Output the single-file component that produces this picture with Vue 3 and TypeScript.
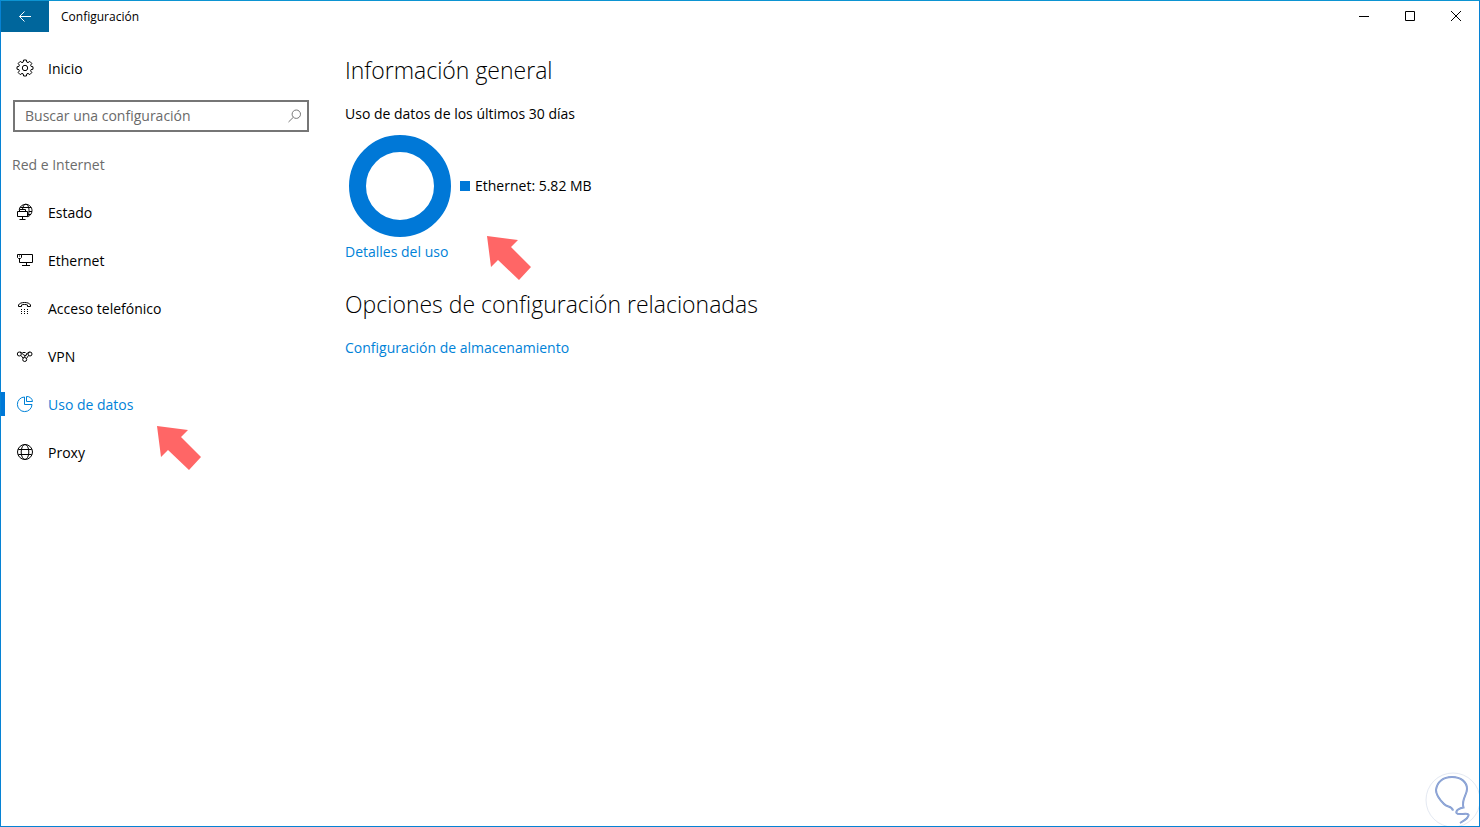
<script setup lang="ts">
import { ref } from 'vue'

interface NavItem {
  id: string
  label: string
}

const items: NavItem[] = [
  { id: 'status', label: 'Estado' },
  { id: 'ethernet', label: 'Ethernet' },
  { id: 'dialup', label: 'Acceso telefónico' },
  { id: 'vpn', label: 'VPN' },
  { id: 'usage', label: 'Uso de datos' },
  { id: 'proxy', label: 'Proxy' },
]

const active = ref('usage')
const query = ref('')
</script>

<template>
  <div class="window">
    <header class="titlebar">
      <button class="back" type="button" aria-label="Atrás">
        <svg width="14" height="12" viewBox="0 0 14 12"><path d="M13 5.500H1.500M6.500.500L1.500 5.500l5 5" /></svg>
      </button>
      <span class="title">Configuración</span>
      <div class="controls">
        <button type="button" aria-label="Minimizar">
          <svg width="12" height="12" viewBox="0 0 12 12"><path d="M1 5.500h10" /></svg>
        </button>
        <button type="button" aria-label="Maximizar">
          <svg width="12" height="12" viewBox="0 0 12 12"><path d="M1.500.500h9v9h-9z" /></svg>
        </button>
        <button type="button" aria-label="Cerrar">
          <svg width="12" height="12" viewBox="0 0 12 12"><path d="M1 0l10 10M11 0L1 10" /></svg>
        </button>
      </div>
    </header>

    <div class="body">
      <aside class="sidebar">
        <a class="row home" href="#inicio">
          <svg class="icon" viewBox="0 0 18 18">
            <path d="M7.6 1h2.8l.4 2.1 1.2.5 1.8-1.2 2 2-1.2 1.8.5 1.2 1.9.4v2.4l-1.9.4-.5 1.2 1.2 1.8-2 2-1.8-1.2-1.2.5-.4 2.1H7.6l-.4-2.1-1.2-.5-1.8 1.2-2-2 1.2-1.8-.5-1.2L1 10.200V7.800l1.900-.4.5-1.200-1.200-1.800 2-2L6 3.600l1.200-.5z" />
            <circle cx="9" cy="9" r="2.700" />
          </svg>
          <span>Inicio</span>
        </a>

        <label class="search">
          <input v-model="query" type="text" placeholder="Buscar una configuración" aria-label="Buscar una configuración" />
          <svg width="14" height="14" viewBox="0 0 14 14"><circle cx="9.300" cy="5.200" r="4.200" /><path d="M6.300 8.300L1.500 13" /></svg>
        </label>

        <h2 class="section">Red e Internet</h2>

        <nav>
          <a
            v-for="item in items"
            :key="item.id"
            class="row"
            :class="{ active: item.id === active }"
            :href="'#' + item.id"
            @click="active = item.id"
          >
            <svg class="icon" viewBox="0 0 18 18">
              <g v-if="item.id === 'status'">
                <path d="M3.200 6.500C3.800 3.500 6.500 1.300 9.700 1.300c3.600 0 6.300 2.900 6.300 6.300 0 3.100-2.200 5.600-4.500 6.100" />
                <path d="M6.500 6.500c.3-3 1.500-5.200 3.200-5.200 2 0 3.300 2.700 3.300 6.200 0 2.400-.5 4.500-1.500 6M4.200 4.500h11M13 8.500h3M12 11.500h3" />
                <path d="M3.500 8.500v-2h6v2M1.500 8.500h10v5h-10zM6.500 13.500v3M3.500 16.500h6" />
              </g>
              <g v-else-if="item.id === 'ethernet'">
                <path d="M5.500 3.500h11v8h-13V8M10.500 11.500v3M6 14.500h8M1.500 3.500h4v3l-1 1h-2l-1-1zM3 5h1" />
              </g>
              <g v-else-if="item.id === 'dialup'">
                <path d="M5.500 7.500h-3V6C3.300 4.300 5.700 3.500 8.500 3.500s5.200.8 6 2.500v1.500h-3V6C10 5.300 7 5.300 5.500 6z" />
                <path class="dots" d="M5 10h1v1H5zM8 10h1v1H8zM11 10h1v1h-1zM5 12h1v1H5zM8 12h1v1H8zM11 12h1v1h-1zM5 14h1v1H5zM8 14h1v1H8zM11 14h1v1h-1z" />
              </g>
              <g v-else-if="item.id === 'vpn'">
                <circle cx="3.300" cy="7" r="2" />
                <circle cx="14" cy="7" r="2" />
                <circle cx="8.700" cy="12.500" r="2" />
                <path d="M4 5c2.500 0 2.500 3.500 5 3.500 1.500 0 2-1 1.500-2M13.500 5c-3 0-3 4.500-6 5.500M5 8.500l2 2.500M12.500 8.500l-2 3M6.500 5.500h3" />
              </g>
              <g v-else-if="item.id === 'usage'">
                <path d="M8.500 2a7.300 7.300 0 1 0 7.500 7.500H8.500z" />
                <path d="M10.500 1.500a5.500 5.500 0 0 1 6 5h-6z" />
              </g>
              <g v-else>
                <circle cx="9" cy="9" r="7.500" />
                <ellipse cx="9" cy="9" rx="3.800" ry="7.500" />
                <path d="M2.300 6.500h13.400M2.300 11.500h13.400" />
              </g>
            </svg>
            <span>{{ item.label }}</span>
            <svg v-if="item.id === 'usage'" class="pointer" viewBox="0 0 44 44">
              <path d="M0 0l31 4-7 7 20 20-12 13-21-20-7 7z" />
            </svg>
          </a>
        </nav>
      </aside>

      <main class="content">
        <section class="block">
          <h1>Información general</h1>
          <p>Uso de datos de los últimos 30 días</p>
          <div class="usage">
            <svg class="ring" viewBox="0 0 102 102" role="img" aria-label="Ethernet: 5.82 MB">
              <circle cx="51" cy="51" r="42.500" />
            </svg>
            <span class="swatch"></span>
            <span>Ethernet: 5.82 MB</span>
            <svg class="pointer" viewBox="0 0 44 44">
              <path d="M0 0l31 4-7 7 20 20-12 13-21-20-7 7z" />
            </svg>
          </div>
          <a class="link" href="#detalles">Detalles del uso</a>
        </section>
        <section class="block">
          <h1>Opciones de configuración relacionadas</h1>
          <a class="link" href="#almacenamiento">Configuración de almacenamiento</a>
        </section>
      </main>
    </div>

    <svg class="bulb" viewBox="0 0 54 54" aria-hidden="true">
      <circle class="halo" cx="28" cy="28" r="27" />
      <path d="M28 38.500c-1-5-6-3-9-6.500C14 27 11 23 11 18 12 10 18 5 27 5c9 0 15 5 15 12 0 6-6 11-3.500 18.500-4 .5-8 3-7 5.500 2 3 10-1 12 1.500 1 3-4 6-8.500 8.500" />
      <path class="sheen" d="M28 38.500c-1-5-6-3-9-6.500C14 27 11 23 11 18 12 10 18 5 27 5c9 0 15 5 15 12 0 6-6 11-3.500 18.500-4 .5-8 3-7 5.500 2 3 10-1 12 1.500 1 3-4 6-8.500 8.500" />
    </svg>
  </div>
</template>

<style>
body {
  margin: 0;
}
</style>

<style scoped>
.window {
  position: relative;
  box-sizing: border-box;
  min-height: 100vh;
  border: 1px solid #0682d4;
  border-top-color: #0c94d2;
  background: #fff;
  color: #000;
  font: 14px/20px "Segoe UI", "Open Sans", "Noto Sans", sans-serif;
}
svg {
  fill: none;
  stroke: currentColor;
  flex: none;
}
button {
  padding: 0;
  border: 0;
  background: none;
  color: #000;
  display: flex;
  align-items: center;
  justify-content: center;
}
.titlebar {
  display: flex;
  height: 31px;
}
.back {
  width: 48px;
  background: #00669c;
  color: #fff;
}
.title {
  padding-left: 12px;
  font-size: 12px;
  line-height: 31px;
}
.controls {
  display: flex;
  margin-left: auto;
}
.controls button {
  width: 46px;
}
.body {
  display: flex;
}
.sidebar {
  flex: none;
  width: 308px;
  padding-top: 12px;
}
.row {
  position: relative;
  display: flex;
  align-items: center;
  gap: 14px;
  height: 48px;
  padding-left: 15px;
  color: #000;
  line-height: 22px;
  text-decoration: none;
}
.row span {
  padding-top: 2px;
}
.icon {
  width: 18px;
  height: 18px;
}
.dots {
  fill: currentColor;
  stroke: none;
}
.row.active {
  color: #0082d8;
}
.row.active::before {
  content: "";
  position: absolute;
  left: 0;
  top: 12px;
  width: 4px;
  height: 24px;
  background: #0078d7;
}
.search {
  display: flex;
  align-items: center;
  box-sizing: border-box;
  height: 32px;
  margin: 8px 0 0 12px;
  padding: 0 6px 0 10px;
  border: 2px solid #767676;
  color: #767676;
}
.search input {
  flex: 1;
  min-width: 0;
  padding: 0;
  border: 0;
  outline: 0;
  background: none;
  font: inherit;
}
.search input::placeholder {
  color: #6a6a6a;
  opacity: 1;
}
.section {
  margin: 23px 0 13px 11px;
  color: #6c6c6c;
  font-size: 14px;
  line-height: 20px;
  font-weight: 400;
}
.content {
  flex: 1;
  padding: 22px 36px 0;
}
.block {
  margin-bottom: 26px;
}
h1 {
  margin: 0 0 18px;
  font-size: 23px;
  line-height: 32px;
  font-weight: 300;
}
p {
  margin: 0;
}
.usage {
  position: relative;
  display: flex;
  align-items: center;
  width: max-content;
  margin: 11px 0 5px 4px;
}
.ring {
  width: 102px;
  height: 102px;
  stroke: #0078d7;
  stroke-width: 17px;
}
.swatch {
  width: 10px;
  height: 10px;
  margin: 0 5px 0 9px;
  background: #0078d7;
}
.link {
  color: #0082d8;
  text-decoration: none;
}
.pointer {
  position: absolute;
  width: 44px;
  height: 44px;
  fill: #ff6666;
  stroke: none;
}
.row .pointer {
  left: 156px;
  top: 46px;
}
.usage .pointer {
  left: 138px;
  top: 101px;
}
.bulb {
  position: absolute;
  right: 0;
  bottom: 0;
  width: 54px;
  height: 54px;
  stroke: #7d9fd0;
  stroke-width: 2px;
}
.halo {
  stroke: #e4e9f2;
  stroke-width: 1px;
}
.sheen {
  stroke: #9aa6da;
  stroke-width: 1px;
}
</style>
